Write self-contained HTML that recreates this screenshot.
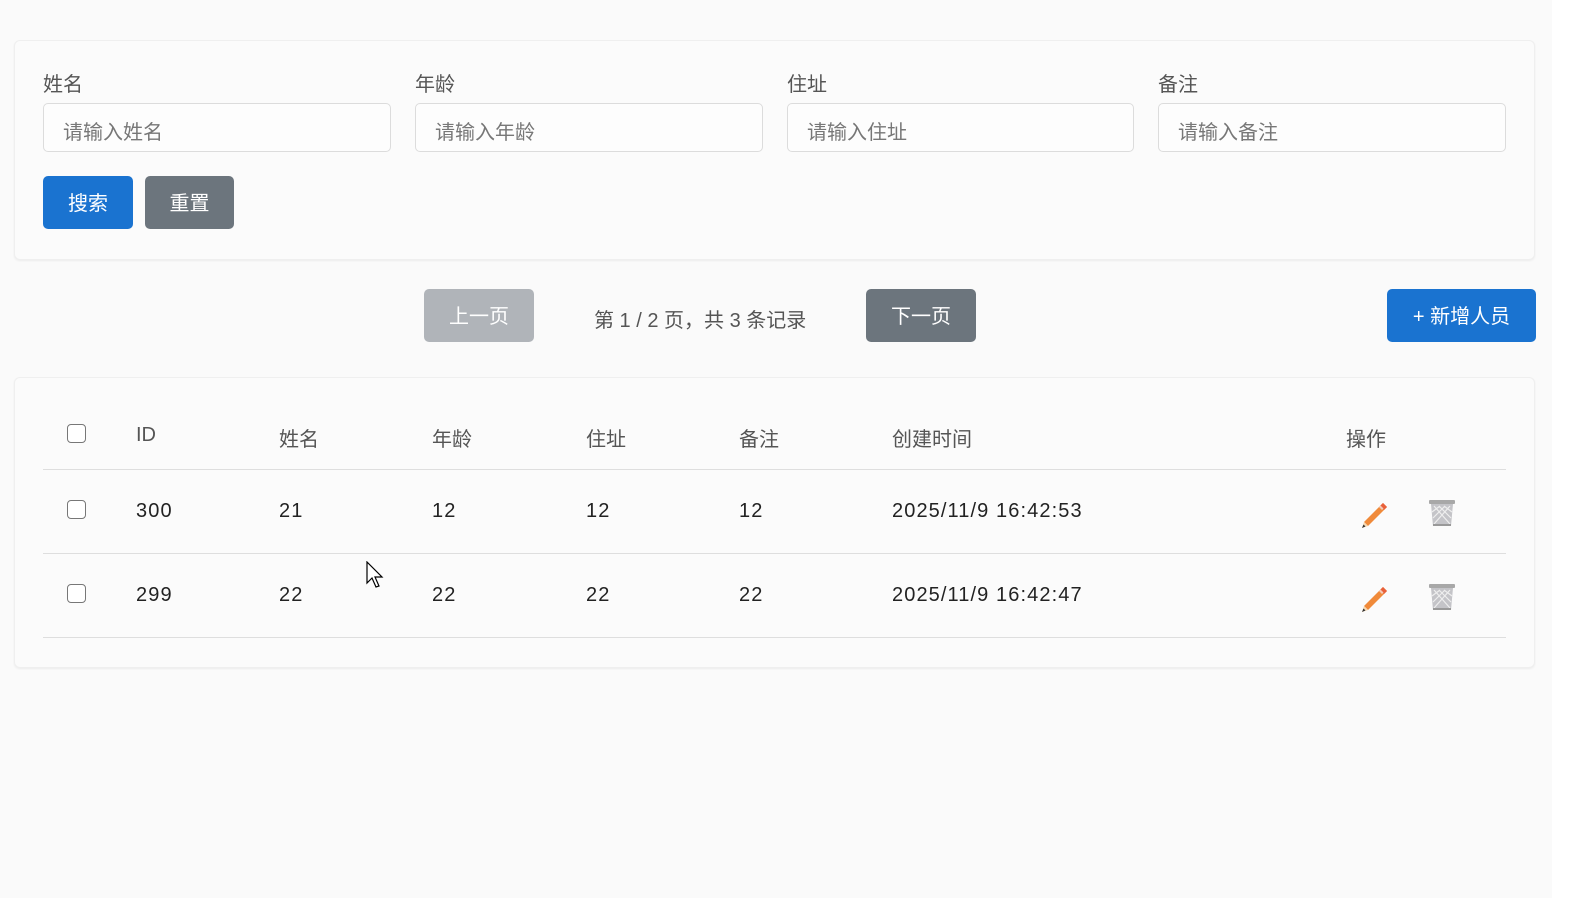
<!DOCTYPE html>
<html><head><meta charset="utf-8"><style>
*{box-sizing:border-box;margin:0;padding:0}
body{width:1586px;height:898px;background:#fafafa;font-family:"Liberation Sans","Noto Sans CJK SC",sans-serif;position:relative;overflow:hidden;color:#333}
.strip{position:absolute;left:1552px;top:0;width:34px;height:898px;background:#fff}
.card{position:absolute;left:14px;width:1521px;background:#fbfbfb;border:1px solid #efefef;border-radius:6px;box-shadow:0 1px 2px rgba(0,0,0,.06)}
.lbl{position:absolute;font-size:20px;color:#555}
.inp{position:absolute;width:348px;height:49px;border:1px solid #dcdcdc;border-radius:5px;background:#fdfdfd;font-size:20px;color:#777;padding:12px 19px}
.btn{position:absolute;border-radius:5px;color:#fff;font-size:20px;text-align:center;padding-top:3px}
.t{position:absolute;font-size:20px}
.n{letter-spacing:1.1px;color:#222}
.h{color:#555}
.cb{position:absolute;width:19px;height:19px;border:1.5px solid #777;border-radius:4px;background:#fff}
.line{position:absolute;left:43px;width:1463px;height:1px;background:#dedede}
</style></head><body>
<div class="strip"></div>
<div class="card" style="top:40px;height:220px"></div>
<div class="lbl" style="left:43px;top:68px">姓名</div>
<div class="lbl" style="left:415px;top:68px">年龄</div>
<div class="lbl" style="left:787px;top:68px">住址</div>
<div class="lbl" style="left:1158px;top:68px">备注</div>
<div class="inp" style="left:43px;top:103px">请输入姓名</div>
<div class="inp" style="left:415px;top:103px">请输入年龄</div>
<div class="inp" style="left:787px;top:103px;width:347px">请输入住址</div>
<div class="inp" style="left:1158px;top:103px">请输入备注</div>
<div class="btn" style="left:43px;top:176px;width:90px;height:53px;line-height:50px;background:#1a73d0">搜索</div>
<div class="btn" style="left:145px;top:176px;width:89px;height:53px;line-height:50px;background:#6c757d">重置</div>

<div class="btn" style="left:424px;top:289px;width:110px;height:53px;line-height:50px;background:#b0b4b9">上一页</div>
<div class="t" style="left:594px;top:304px;color:#555">第 1 / 2 页，共 3 条记录</div>
<div class="btn" style="left:866px;top:289px;width:110px;height:53px;line-height:50px;background:#6c757d">下一页</div>
<div class="btn" style="left:1387px;top:289px;width:149px;height:53px;line-height:50px;background:#1a73d0">+ 新增人员</div>

<div class="card" style="top:377px;height:291px"></div>
<div class="cb" style="left:67px;top:424px"></div>
<div class="t h" style="left:136px;top:424px">ID</div>
<div class="t h" style="left:279px;top:423px">姓名</div>
<div class="t h" style="left:432px;top:423px">年龄</div>
<div class="t h" style="left:586px;top:423px">住址</div>
<div class="t h" style="left:739px;top:423px">备注</div>
<div class="t h" style="left:892px;top:423px">创建时间</div>
<div class="t h" style="left:1346px;top:423px">操作</div>
<div class="line" style="top:469px"></div>

<div class="cb" style="left:67px;top:500px"></div>
<div class="t n" style="left:136px;top:500px">300</div>
<div class="t n" style="left:279px;top:500px">21</div>
<div class="t n" style="left:432px;top:500px">12</div>
<div class="t n" style="left:586px;top:500px">12</div>
<div class="t n" style="left:739px;top:500px">12</div>
<div class="t n" style="left:892px;top:500px">2025/11/9 16:42:53</div>
<div class="line" style="top:553px"></div>

<div class="cb" style="left:67px;top:584px"></div>
<div class="t n" style="left:136px;top:584px">299</div>
<div class="t n" style="left:279px;top:584px">22</div>
<div class="t n" style="left:432px;top:584px">22</div>
<div class="t n" style="left:586px;top:584px">22</div>
<div class="t n" style="left:739px;top:584px">22</div>
<div class="t n" style="left:892px;top:584px">2025/11/9 16:42:47</div>
<div class="line" style="top:637px"></div>

<svg width="0" height="0" style="position:absolute"><defs>
<g id="pen"><path d="M3 24 L22 5 L26 9 L7 28 Z" fill="#f08a3a"/><path d="M19 8 L22 5 L26 9 L23 12 Z" fill="#e8603a"/><path d="M18 9 L21 12 L22.5 10.5 L19.5 7.5Z" fill="#f3c9b8"/><path d="M3 24 L7 28 L1 30 Z" fill="#f5d7b0"/><path d="M1 30 L2.5 26.5 L4.5 28.5 Z" fill="#333"/></g>
<g id="bin"><rect x="2" y="2" width="26" height="4" rx="1" fill="#a8a8a8"/><path d="M4 6 H26 L24 28 H6 Z" fill="#c4c4c8"/><path d="M7 8 L23 26 M12 8 L24 20 M17 8 L25 14 M23 8 L7 26 M18 8 L6 20 M13 8 L5 14" stroke="#eee" stroke-width="1.2"/><rect x="6" y="26" width="18" height="2" fill="#999"/></g>
</defs></svg>
<svg style="position:absolute;left:1361px;top:498px" width="30" height="30"><use href="#pen"/></svg>
<svg style="position:absolute;left:1427px;top:498px" width="30" height="30"><use href="#bin"/></svg>
<svg style="position:absolute;left:1361px;top:582px" width="30" height="30"><use href="#pen"/></svg>
<svg style="position:absolute;left:1427px;top:582px" width="30" height="30"><use href="#bin"/></svg>

<svg style="position:absolute;left:366px;top:561px" width="22" height="30"><path d="M1 1 L1 22 L6 17 L10 26 L13 25 L9 16 L16 16 Z" fill="#fff" stroke="#000" stroke-width="1.2"/></svg>
</body></html>
